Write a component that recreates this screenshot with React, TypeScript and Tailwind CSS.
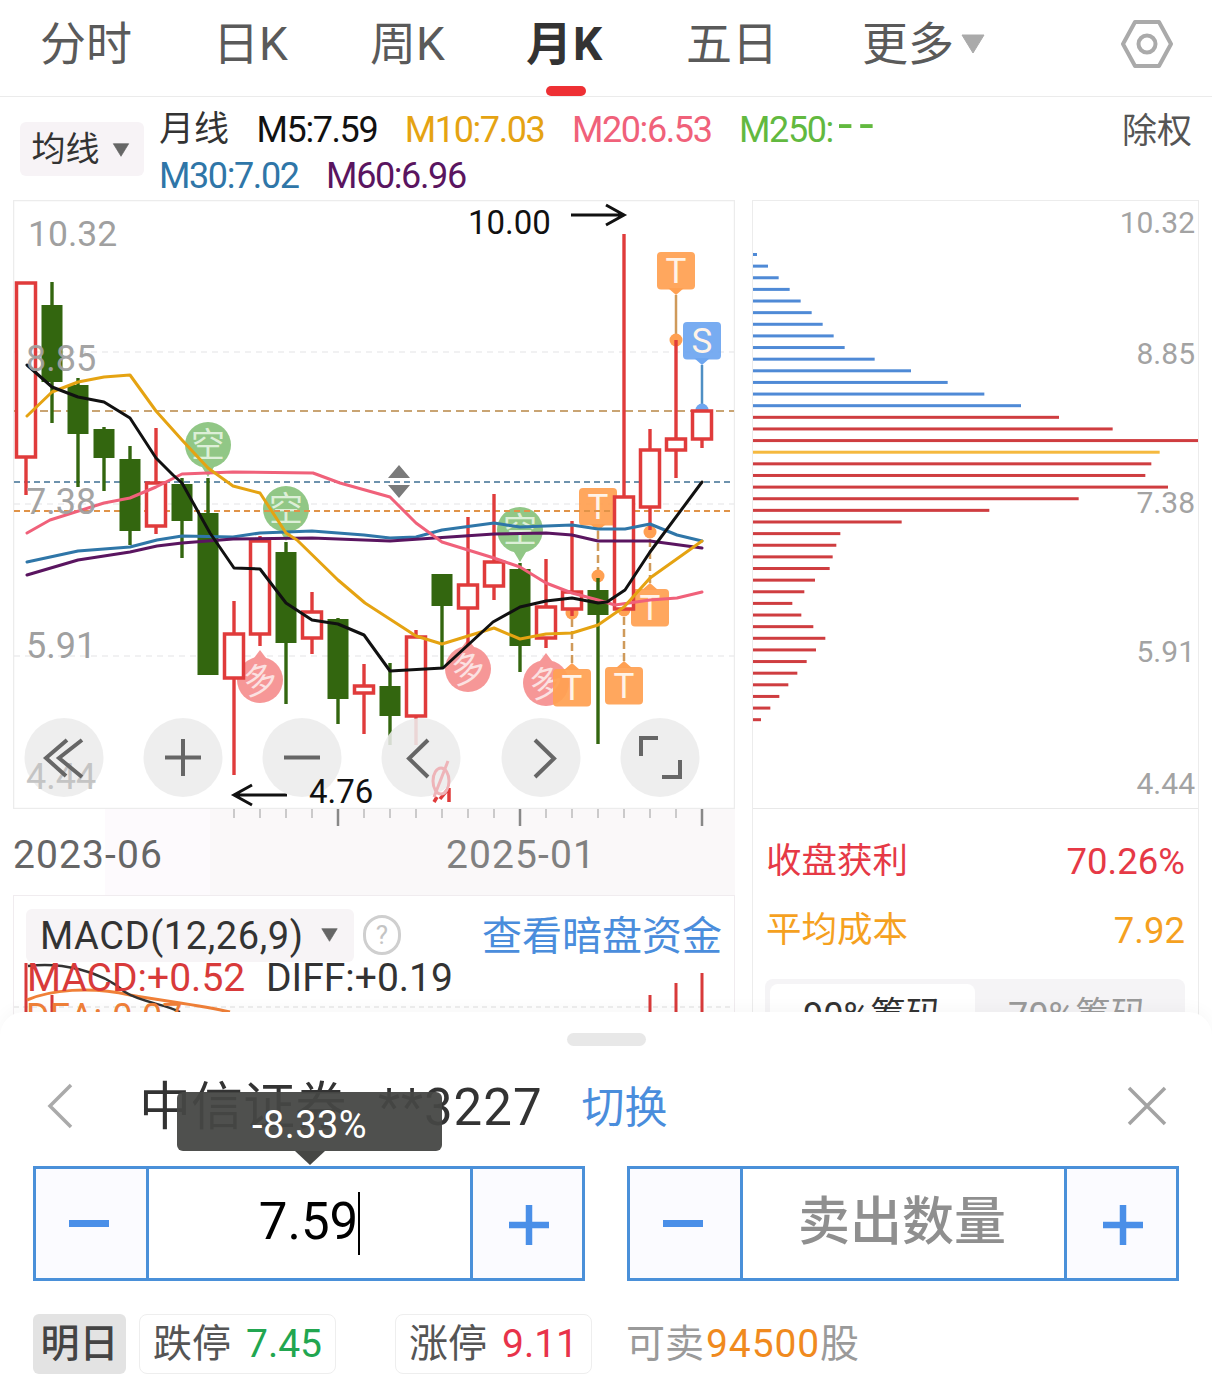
import React from "react"

const RED = "#e03b3b"
const GREEN = "#33660f"

// x, bodyTop, bodyBottom, wickTop, wickBottom, up
const candles: [number, number, number, number, number, boolean][] = [
  [26, 283, 457, 283, 495, true],
  [52, 305, 382, 282, 423, false],
  [78, 385, 434, 378, 487, false],
  [104, 429, 458, 427, 491, false],
  [130, 459, 531, 446, 545, false],
  [156, 483, 526, 428, 534, true],
  [182, 484, 521, 478, 558, false],
  [208, 513, 675, 478, 675, false],
  [234, 634, 678, 601, 775, true],
  [260, 541, 634, 536, 646, true],
  [286, 552, 643, 542, 704, false],
  [312, 612, 638, 592, 654, true],
  [338, 619, 699, 618, 724, false],
  [364, 686, 693, 664, 734, true],
  [390, 686, 716, 663, 745, false],
  [416, 637, 716, 630, 745, true],
  [442, 574, 606, 574, 667, false],
  [468, 585, 608, 517, 645, true],
  [494, 562, 586, 494, 600, true],
  [520, 569, 646, 563, 672, false],
  [546, 607, 638, 559, 648, true],
  [572, 592, 609, 521, 616, true],
  [598, 590, 615, 578, 744, false],
  [624, 497, 609, 234, 609, true],
  [650, 450, 507, 429, 530, true],
  [676, 439, 450, 340, 478, true],
  [702, 411, 439, 411, 448, true],
]

const maLines: { color: string; points: string }[] = [
  { color: "#2f76a8", points: "27,562 78,551 130,547 157,540 182,536 233,537 260,533 312,531 364,535 390,538 416,537 442,530 494,523 520,527 572,525 598,529 625,529 650,524 677,535 702,541" },
  { color: "#5a1560", points: "27,575 78,560 130,552 157,546 182,543 233,539 312,538 390,541 494,534 546,533 572,535 598,541 650,541 702,548" },
  { color: "#f0617a", points: "27,533 50,520 104,503 130,498 156,487 182,474 233,472 313,473 340,483 390,497 416,523 442,542 494,558 520,567 546,583 572,593 598,600 615,605 650,600 677,598 702,592" },
  { color: "#e5a312", points: "27,416 52,392 78,382 104,377 130,375 156,411 182,440 208,468 233,486 260,493 286,533 297,540 338,580 365,603 416,636 442,644 494,628 520,639 546,634 572,633 598,625 624,607 650,578 702,541" },
  { color: "#111111", points: "27,365 52,387 78,397 104,402 130,418 156,458 173,475 182,483 210,533 234,568 260,569 286,603 312,620 338,624 364,635 390,671 443,668 493,622 520,607 546,601 572,598 598,603 607,602 625,590 650,552 702,482" },
]

const chipEnds = [35, 68, 100, 133, 166, 199, 232, 265, 298, 388, 497, 607, 717, 827, 941, 1102, 1360, 1243, 1218, 1200, 1268, 1000, 732, 469, 285, 273, 262, 253, 209, 177, 141, 168, 204, 240, 212, 184, 156, 129, 102, 75, 47]

const Triangle = ({ color, className }: { color: string; className?: string }) => (
  <svg viewBox="0 0 24 20" className={className}>
    <path d="M1 1 H23 L12 19 Z" fill={color} strokeLinejoin="round" stroke={color} strokeWidth="1" />
  </svg>
)

const Bubble = ({ x, y, type }: { x: number; y: number; type: "kong" | "duo" }) => {
  const kong = type === "kong"
  return (
    <g opacity={0.95}>
      {kong ? (
        <path d={`M${x - 6} ${y + 22} L${x} ${y + 32} L${x + 6} ${y + 22} Z`} fill="#8cc580" />
      ) : (
        <path d={`M${x - 6} ${y - 22} L${x} ${y - 30} L${x + 6} ${y - 22} Z`} fill="#f69292" />
      )}
      <circle cx={x} cy={y} r={23} fill={kong ? "#8cc580" : "#f69292"} />
      <text x={x} y={y + 12} fontSize={34} textAnchor="middle" fill={kong ? "#dcefd6" : "#fbe0e0"} transform={kong ? undefined : `rotate(-14 ${x} ${y})`}>
        {kong ? "空" : "多"}
      </text>
    </g>
  )
}

const Tag = ({ x, top, label, color, tipUp, dotY, dashed }: { x: number; top: number; label: string; color: string; tipUp?: boolean; dotY: number; dashed?: boolean }) => {
  const tipY = tipUp ? top - 6 : top + 43
  return (
    <g>
      <line x1={x} x2={x} y1={tipY} y2={dotY} stroke={color === "#6ea6f0" ? "#4f8fc4" : "#cf9a5a"} strokeWidth={2.5} strokeDasharray={dashed ? "8 4" : undefined} />
      <circle cx={x} cy={dotY} r={6.5} fill={color} />
      <path d={tipUp ? `M${x - 8} ${top + 1} L${x} ${tipY} L${x + 8} ${top + 1} Z` : `M${x - 8} ${top + 36} L${x} ${tipY} L${x + 8} ${top + 36} Z`} fill={color} />
      <rect x={x - 19} y={top} width={38} height={37.5} rx={4} fill={color} opacity={0.93} />
      <text x={x} y={top + 31} fontSize={35} textAnchor="middle" fill="#fff3e8">
        {label}
      </text>
    </g>
  )
}

const ChartPanel = () => {
  const btn = [64, 183, 302, 421, 541, 660]
  return (
    <svg viewBox="13 200 722 609" className="block w-[722px] h-[609px]">
      <rect x={13.5} y={200.5} width={721} height={608} fill="#fff" stroke="#ececec" strokeWidth={1.5} />
      {[352, 504, 656].map(y => (
        <line key={y} x1={14} x2={734} y1={y} y2={y} stroke="#e4e4e6" strokeWidth={1.2} strokeDasharray="6 5" />
      ))}
      <Bubble x={208} y={445} type="kong" />
      <Bubble x={286} y={509} type="kong" />
      <Bubble x={520} y={530} type="kong" />
      <Bubble x={260} y={680} type="duo" />
      <Bubble x={468} y={669} type="duo" />
      <Bubble x={546} y={683} type="duo" />
      <Tag x={676} top={252} label="T" color="#ffa052" dotY={340} />
      <Tag x={702} top={322} label="S" color="#6ea6f0" dotY={410} />
      <Tag x={598} top={488} label="T" color="#ffa052" dotY={576} dashed />
      <Tag x={650} top={589} label="T" color="#ffa052" tipUp dotY={532} dashed />
      <Tag x={572} top={669} label="T" color="#ffa052" tipUp dotY={613} dashed />
      <Tag x={624} top={667} label="T" color="#ffa052" tipUp dotY={610} dashed />
      <line x1={14} x2={734} y1={411} y2={411} stroke="#c9a473" strokeWidth={2} strokeDasharray="8 5" />
      <line x1={14} x2={734} y1={482} y2={482} stroke="#6d92ad" strokeWidth={2} strokeDasharray="6 4" />
      <line x1={14} x2={734} y1={511} y2={511} stroke="#e09348" strokeWidth={2} strokeDasharray="6 4" />
      {candles.map(([x, top, bottom, wt, wb, up]) => {
        const color = up ? RED : GREEN
        return (
          <g key={x}>
            {wt < top && <line x1={x} x2={x} y1={wt} y2={top} stroke={color} strokeWidth={3.4} />}
            {wb > bottom && <line x1={x} x2={x} y1={bottom} y2={wb} stroke={color} strokeWidth={3.4} />}
            {up ? (
              <rect x={x - 9.5} y={top} width={19} height={bottom - top} fill="#fff" stroke={color} strokeWidth={3.5} />
            ) : (
              <rect x={x - 10.5} y={top} width={21} height={bottom - top} fill={color} />
            )}
          </g>
        )
      })}
      {maLines.map(l => (
        <polyline key={l.color} points={l.points} fill="none" stroke={l.color} strokeWidth={3} strokeLinejoin="round" strokeLinecap="round" />
      ))}
      <path d="M388 478 L399 465 L410 478 Z M388 485 L399 498 L410 485 Z" fill="#7a7a7a" />
      <text x={28} y={246} fontSize={35.5} fill="#a0a0a0">10.32</text>
      <text x={26} y={371} fontSize={36} fill="#a0a0a0" opacity={0.95}>8.85</text>
      <text x={26} y={514} fontSize={36} fill="#a0a0a0" opacity={0.95}>7.38</text>
      <text x={26} y={658} fontSize={36} fill="#a0a0a0">5.91</text>
      <text x={468} y={234} fontSize={33} fill="#111">10.00</text>
      <path d="M571 215 H624 M606 205 L624 215 L606 225" fill="none" stroke="#111" strokeWidth={3} />
      <path d="M287 795 H234 M252 785 L234 795 L252 805" fill="none" stroke="#111" strokeWidth={3} />
      <path d="M437 797 L434 802 M449 788 V802 M440 799 L449 788" fill="none" stroke={RED} strokeWidth={3.5} />
      {btn.map(x => (
        <circle key={x} cx={x} cy={757.5} r={39.5} fill="#ececec" opacity={0.88} />
      ))}
      <text x={26} y={789} fontSize={36} fill="#c4c4c4">4.44</text>
      <ellipse cx={441} cy={781} rx={8} ry={13} fill="none" stroke="#eeb4b8" strokeWidth={3} />
      <line x1={448} x2={434} y1={761} y2={797} stroke="#eeb4b8" strokeWidth={3} />
      <text x={309} y={803} fontSize={33} fill="#111">4.76</text>
      <g fill="none" stroke="#666" strokeWidth={4}>
        <path d="M67 740 L46 758 L66 776 M82 740 L59 758 L82 777" />
        <path d="M165 757.5 H201 M183 739 V776" />
        <path d="M284 757.5 H320" />
        <path d="M428 740 L409 758.5 L428 777" />
        <path d="M535 740 L554 758.5 L535 777" />
        <path d="M658 738 H641 V756 M680 760 V777 H662" />
      </g>
    </svg>
  )
}

const ChipPanel = () => (
  <svg viewBox="753 201 445 607" className="block w-[445px] h-[607px]">
    {chipEnds.map((end, i) => {
      const y = 254.5 + i * 11.63
      const width = (end - 23) / 3
      const color = i < 14 ? "#4f8ad6" : i === 17 ? "#f5b93f" : "#cf3d40"
      return <rect key={i} x={753} y={y - 1.5} width={width} height={3} fill={color} />
    })}
    {[
      ["10.32", 233],
      ["8.85", 364],
      ["7.38", 513],
      ["5.91", 662],
      ["4.44", 794],
    ].map(([t, y]) => (
      <text key={t} x={1195} y={y} fontSize={30} textAnchor="end" fill="#a3a3a3">
        {t}
      </text>
    ))}
  </svg>
)

const XAxis = () => {
  const ticks: number[] = []
  for (let x = 234; x <= 702; x += 26) ticks.push(x)
  return (
    <svg viewBox="13 809 722 18" className="block w-[722px] h-[18px]">
      {ticks.map(x => {
        const major = x === 338 || x === 520 || x === 702
        return <line key={x} x1={x} x2={x} y1={809} y2={major ? 826 : 818} stroke={major ? "#888" : "#bbb"} strokeWidth={major ? 2.5 : 1.5} />
      })}
    </svg>
  )
}

const Stepper = ({ children }: { children: React.ReactNode }) => (
  <div className="flex w-[552px] h-[115px] border-[3px] border-[#4a90d9]">
    <div className="flex w-[113px] shrink-0 items-center justify-center border-r-[3px] border-[#4a90d9] bg-[#fbfbff] pr-[4px]">
      <svg viewBox="0 0 40 8" className="w-[40px] h-[8px]">
        <rect width="40" height="7" fill="#4a8fe8" />
      </svg>
    </div>
    <div className="relative flex flex-1 items-center justify-center">{children}</div>
    <div className="flex w-[112px] shrink-0 items-center justify-center border-l-[3px] border-[#4a90d9] bg-[#fbfbff] pl-[3px] pt-[3px]">
      <svg viewBox="0 0 40 40" className="w-[40px] h-[40px]">
        <path d="M0 20 H40 M20 0 V40" stroke="#4a8fe8" strokeWidth="6.5" />
      </svg>
    </div>
  </div>
)

const App = () => {
  const tabClass = "text-[46px] leading-[60px] text-[#5a5a5a]"
  return (
    <div className="relative w-[1212px] h-[1395px] overflow-hidden bg-white font-['Roboto','Noto_Sans_CJK_SC',sans-serif]">
      {/* tabs */}
      <div className="relative flex items-center h-[97px] border-b border-[#ebebeb] pl-[40px] pb-[8px]">
        <span className={`${tabClass} w-[173px]`}>分时</span>
        <span className={`${tabClass} w-[157px]`}>日K</span>
        <span className={`${tabClass} w-[156px]`}>周K</span>
        <span className="w-[160px] text-[46px] leading-[60px] font-bold text-[#333] tracking-[1px]">月K</span>
        <span className={`${tabClass} w-[176px]`}>五日</span>
        <span className={tabClass}>更多</span>
        <Triangle color="#aaaaaa" className="ml-[7px] w-[24px] h-[20px]" />
        <svg viewBox="0 0 52 50" className="ml-[136px] w-[52px] h-[50px]">
          <path d="M2 25 L14 3 H38 L50 25 L38 47 H14 Z" fill="none" stroke="#aaa" strokeWidth="4" strokeLinejoin="round" />
          <circle cx="26" cy="25" r="8.5" fill="none" stroke="#aaa" strokeWidth="4" />
        </svg>
        <div className="absolute left-[546px] top-[86px] w-[40px] h-[10px] rounded-full bg-[#ee3034]" />
      </div>

      {/* legend */}
      <div className="flex h-[103px] pl-[20px] pr-[20px]">
        <div className="mt-[25px] flex items-center justify-center w-[124px] h-[54px] rounded-[6px] bg-[#f7f3f6] pr-[3px] pt-[1px]">
          <span className="text-[34px] text-[#333]">均线</span>
          <Triangle color="#666666" className="ml-[12px] w-[18px] h-[14px]" />
        </div>
        <div className="ml-[15px] flex-1 pt-[10px] text-[36px] leading-[46px] tracking-[-1.4px]">
          <div className="flex gap-[27.5px]">
            <span className="tracking-normal text-[35px] text-[#333]">月线</span>
            <span className="text-[#111]">M5:7.59</span>
            <span className="text-[#e5a312]">M10:7.03</span>
            <span className="text-[#f0617a]">M20:6.53</span>
            <span className="text-[#62b93f]">
              M250:<span className="ml-[5px] text-[52px] leading-[20px] tracking-[7px]">--</span>
            </span>
          </div>
          <div className="flex gap-[27.5px]">
            <span className="text-[#2f76a8]">M30:7.02</span>
            <span className="text-[#5a1560]">M60:6.96</span>
          </div>
        </div>
        <span className="pt-[12px] text-[35px] leading-[46px] text-[#555]">除权</span>
      </div>

      {/* main */}
      <div className="flex pl-[13px] gap-[17px]">
        <div className="w-[722px] shrink-0">
          <ChartPanel />
          <div className="h-[86px] bg-[linear-gradient(to_right,#ffffff_92px,#fdfafd_92px,#fdfafd_197px,#faf8f9_197px)]">
            <XAxis />
            <div className="flex h-[56px] items-center text-[39px] tracking-[1.1px]">
              <span className="w-[433px] text-[#666]">2023-06</span>
              <span className="text-[#808080]">2025-01</span>
            </div>
          </div>
          <div className="relative h-[200px] border border-[#f0ecef] pl-[12px] pt-[11px]">
            <svg viewBox="14 896 720 120" className="absolute left-0 top-0 w-[720px] h-[120px]">
              <line x1={14} x2={734} y1={1007} y2={1007} stroke="#ddd" strokeWidth={1.2} strokeDasharray="5 4" />
              <path d="M26 963 V1012 M52 995 V1012 M650 995 V1012 M676 983 V1012 M702 973 V1012" stroke="#d83a3a" strokeWidth={3} fill="none" />
              <path d="M27 1000 C50 990 90 986 130 995 C170 1002 200 1005 230 1012" stroke="#f08038" strokeWidth={3} fill="none" />
              <path d="M28 966 C60 962 100 970 125 992 C140 1002 165 1004 180 1012" stroke="#333" strokeWidth={2.5} fill="none" />
            </svg>
            <div className="relative flex items-center">
              <div className="flex w-[328px] h-[53px] items-center rounded-[6px] bg-[#f7f4f6] pl-[14px] pt-[2px] text-[38px] text-[#333]">
                <span className="w-[280px] tracking-[0.6px]">MACD(12,26,9)</span>
                <Triangle color="#666666" className="w-[19px] h-[14px] -mt-[3px]" />
              </div>
              <div className="ml-[9px] flex w-[38px] h-[40px] items-center justify-center rounded-full border-[3px] border-[#cfcfcf] text-[26px] text-[#c4c4c4]">?</div>
              <span className="ml-[81px] pt-[3px] text-[40px] leading-[53px] text-[#4a8ddc]">查看暗盘资金</span>
            </div>
            <div className="relative flex mt-[-8px] text-[39px] leading-[46px] text-[#333]">
              <span className="ml-[1px] w-[239px] text-[#d83a3a]">MACD:+0.52</span>
              <span>DIFF:+0.19</span>
            </div>
            <div className="relative mt-[-6px] text-[36px] leading-[44px] text-[#f08038]">DEA:-0.07</div>
          </div>
        </div>

        <div className="w-[447px] shrink-0 border-x border-t border-[#ececec]">
          <ChipPanel />
          <div className="border-t border-[#e8e8e8] px-[13px] pt-[28px]">
            <div className="flex h-[50px] items-center justify-between text-[#e63946]">
              <span className="text-[35.5px]">收盘获利</span>
              <span className="text-[36.5px]">70.26%</span>
            </div>
            <div className="mt-[19px] flex h-[50px] items-center justify-between text-[#f5a11f]">
              <span className="text-[35.5px]">平均成本</span>
              <span className="text-[36.5px]">7.92</span>
            </div>
            <div className="mt-[23px] -ml-[1px] flex h-[80px] rounded-[8px] bg-[#f5f4f6] pl-[5px] pt-[5px]">
              <div className="w-[205px] rounded-t-[8px] bg-white pt-[5px] text-center text-[36px] text-[#333]">90%筹码</div>
              <div className="w-[205px] pt-[5px] text-center text-[36px] text-[#9a9a9a]">70%筹码</div>
            </div>
          </div>
        </div>
      </div>

      {/* sell sheet */}
      <div className="absolute left-0 right-0 top-[1012px] bottom-0 rounded-t-[24px] bg-white shadow-[0_-4px_16px_rgba(0,0,0,0.03)]">
        <div className="mx-auto mt-[21px] w-[79px] h-[13px] rounded-full bg-[#e8e8e8]" />
        <div className="mt-[16px] flex h-[88px] items-center pl-[47px] pr-[45px]">
          <svg viewBox="0 0 26 46" className="w-[26px] h-[46px]">
            <path d="M24 2 L3 23 L24 44" fill="none" stroke="#aaa" strokeWidth="3.5" />
          </svg>
          <span className="ml-[66px] pt-[3px] text-[52px] leading-[60px] text-[#333]">中信证券</span>
          <span className="ml-[31px] pt-[3px] text-[51px] leading-[60px] text-[#333] tracking-[1px]">**3227</span>
          <span className="ml-[39px] pt-[3px] text-[43px] leading-[60px] text-[#4a8ddc]">切换</span>
          <svg viewBox="0 0 40 40" className="ml-auto w-[40px] h-[40px]">
            <path d="M2 2 L38 38 M38 2 L2 38" fill="none" stroke="#a3a3a3" strokeWidth="3.5" />
          </svg>
        </div>
        <div className="mt-[16px] flex gap-[42px] pl-[33px]">
          <Stepper>
            <span className="text-[51px] text-black -mt-[2px]">7.59</span>
            <span className="w-[2px] h-[63px] bg-black" />
          </Stepper>
          <Stepper>
            <span className="pr-[3px] text-[52px] font-medium text-[#8f8f8f] -mt-[2px]">卖出数量</span>
          </Stepper>
        </div>
        <div className="mt-[33px] flex items-center pl-[33px] text-[39px]">
          <div className="flex w-[93px] h-[60px] items-center justify-center rounded-[6px] bg-[#e3e3e3] font-medium text-[#444]">明日</div>
          <div className="ml-[13px] flex w-[197px] h-[60px] items-center justify-center gap-[15px] rounded-[8px] border border-[#eeeeee] text-[#555]">
            <span>跌停</span>
            <span className="text-[#22a650]">7.45</span>
          </div>
          <div className="ml-[59px] flex w-[197px] h-[60px] items-center justify-center gap-[15px] rounded-[8px] border border-[#eeeeee] text-[#555]">
            <span>涨停</span>
            <span className="text-[#e8334a]">9.11</span>
          </div>
          <div className="ml-[34px] text-[#9a9a9a]">
            可卖<span className="pl-[2px] text-[#f08a1e] tracking-[0.9px]">94500</span>股
          </div>
        </div>

        <div className="absolute left-[177px] top-[80px] flex w-[265px] h-[59px] items-center justify-center rounded-[6px] bg-[#464745]/95 pt-[7px] text-[38px] tracking-[0.4px] text-white">
          -8.33%
          <div className="absolute left-[118px] top-[59px] w-0 h-0 border-x-[15px] border-t-[14px] border-x-transparent border-t-[#464745]" />
        </div>
      </div>
    </div>
  )
}

export default App
